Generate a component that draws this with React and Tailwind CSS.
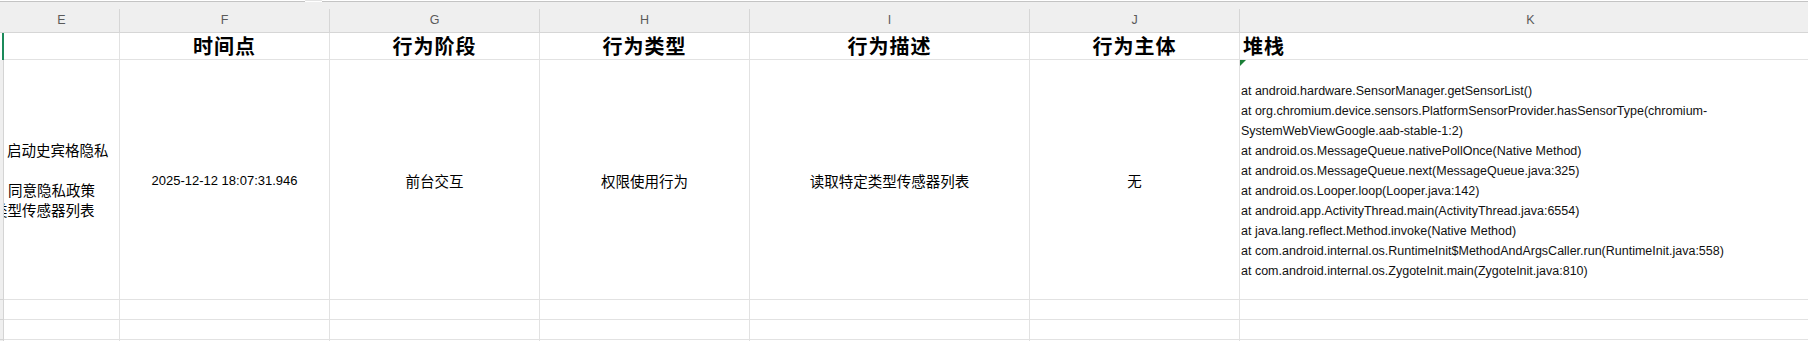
const cols = "grid grid-cols-[4px_116px_210px_210px_210px_280px_210px_582px]";
const cjk = "font-['Noto_Sans_CJK_SC',sans-serif]";

const stack = [
  "at android.hardware.SensorManager.getSensorList()",
  "at org.chromium.device.sensors.PlatformSensorProvider.hasSensorType(chromium-",
  "SystemWebViewGoogle.aab-stable-1:2)",
  "at android.os.MessageQueue.nativePollOnce(Native Method)",
  "at android.os.MessageQueue.next(MessageQueue.java:325)",
  "at android.os.Looper.loop(Looper.java:142)",
  "at android.app.ActivityThread.main(ActivityThread.java:6554)",
  "at java.lang.reflect.Method.invoke(Native Method)",
  "at com.android.internal.os.RuntimeInit$MethodAndArgsCaller.run(RuntimeInit.java:558)",
  "at com.android.internal.os.ZygoteInit.main(ZygoteInit.java:810)",
];

function ColHead({ label }) {
  return (
    <div className="h-[30px] bg-[#efefef]">
      <div className="mt-[7px] h-[23px] border-r border-[#d6d6d6] flex items-center justify-center text-[12.5px] text-[#5a5a5a] font-['Liberation_Sans',sans-serif]">
        {label}
      </div>
    </div>
  );
}

function Cell({ children, className = "" }) {
  return (
    <div className={`relative border-r border-b border-[#e2e2e2] flex items-center ${className}`}>
      {children}
    </div>
  );
}

function RowHead({ active }) {
  return active ? (
    <div className="bg-white flex justify-end">
      <div className="w-[2px] bg-[#1b8a5a]" />
    </div>
  ) : (
    <div className="bg-[#efefef] border-r border-[#d4d4d4]" />
  );
}

function EmptyRow({ h }) {
  return (
    <div className={`${cols} ${h}`}>
      <div className="bg-[#efefef] border-r border-b border-[#d4d4d4]" />
      {Array.from({ length: 7 }).map((_, i) => (
        <Cell key={i} />
      ))}
    </div>
  );
}

export default function App() {
  return (
    <div className="w-[1808px] h-[341px] overflow-hidden bg-white">
      {/* top tab strip */}
      <div className="flex h-[2px] bg-white">
        <div className="w-[305px] mt-[1px] h-[1px] bg-[#c4c4c4]" />
        <div className="w-[17px] h-[1px] bg-[#e4e4e4] rounded-full" />
        <div className="flex-1 mt-[1px] h-[1px] bg-[#c4c4c4]" />
      </div>

      {/* column headers */}
      <div className={`${cols} border-b border-[#d6d6d6]`}>
        <div className="h-[30px] bg-[#efefef]" />
        <ColHead label="E" />
        <ColHead label="F" />
        <ColHead label="G" />
        <ColHead label="H" />
        <ColHead label="I" />
        <ColHead label="J" />
        <ColHead label="K" />
      </div>

      {/* row 1: titles */}
      <div className={`${cols} h-[27px] ${cjk} font-bold text-[20px] leading-[20px] tracking-[1px] text-black`}>
        <RowHead active />
        <Cell />
        <Cell className="justify-center">时间点</Cell>
        <Cell className="justify-center">行为阶段</Cell>
        <Cell className="justify-center">行为类型</Cell>
        <Cell className="justify-center">行为描述</Cell>
        <Cell className="justify-center">行为主体</Cell>
        <Cell className="pl-[3px]">堆栈</Cell>
      </div>

      {/* row 2: data */}
      <div className={`${cols} h-[240px] text-black`}>
        <div className="bg-[#efefef] border-r border-b border-[#d4d4d4]" />
        <Cell className={`overflow-hidden ${cjk} text-[14.5px] leading-[20px]`}>
          <div className="flex flex-col whitespace-nowrap">
            <div className="pl-[3px]">启动史宾格隐私</div>
            <div className="h-[20px]" />
            <div className="pl-[4px]">同意隐私政策</div>
            <div className="ml-[-11px]">类型传感器列表</div>
          </div>
        </Cell>
        <Cell className="justify-center font-['Liberation_Sans',sans-serif] text-[13px] pt-[2px]">
          2025-12-12 18:07:31.946
        </Cell>
        <Cell className={`justify-center ${cjk} text-[14.5px] pt-[2px]`}>前台交互</Cell>
        <Cell className={`justify-center ${cjk} text-[14.5px] pt-[2px]`}>权限使用行为</Cell>
        <Cell className={`justify-center ${cjk} text-[14.5px] pt-[2px]`}>读取特定类型传感器列表</Cell>
        <Cell className={`justify-center ${cjk} text-[14.5px] pt-[2px]`}>无</Cell>
        <Cell className="pl-[1px] pt-[2px] font-['Liberation_Sans',sans-serif] text-[12.5px] leading-[20px] text-[#111]">
          <div className="absolute top-0 left-0 w-0 h-0 border-t-[6px] border-t-[#1a7f37] border-r-[6px] border-r-transparent" />
          <div className="flex flex-col whitespace-nowrap">
            {stack.map((line, i) => (
              <div key={i}>{line}</div>
            ))}
          </div>
        </Cell>
      </div>

      <EmptyRow h="h-[20px]" />
      <EmptyRow h="h-[20px]" />
      <EmptyRow h="h-[20px]" />
    </div>
  );
}
